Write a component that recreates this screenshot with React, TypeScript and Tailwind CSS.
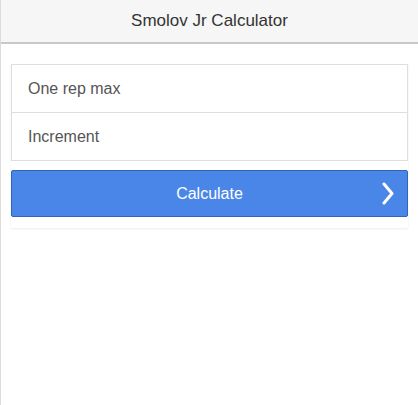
import React, { FC } from 'react';

const App: FC = () => {
  return (
    <div
      className="min-h-[405px] w-[418px] bg-white border-l border-[#dcdcdc]"
      style={{ fontFamily: '"Liberation Sans", Arial, sans-serif' }}
    >
      <div className="h-[44px] bg-[#f6f6f6] border-b-2 border-[#c8c8c8] flex items-center justify-center">
        <span className="text-[17px] text-[#333]">Smolov Jr Calculator</span>
      </div>

      <div className="px-[10px] pt-[20px]">
        <div className="shadow-[0_1px_2px_rgba(0,0,0,0.08)] pb-[11px]">
          <div className="border border-[#dedede] bg-white">
            <input
              className="block w-full h-[48px] px-[16px] text-[16px] text-[#333] placeholder:text-[#555] outline-none border-b border-[#dedede]"
              placeholder="One rep max"
            />
            <input
              className="block w-full h-[47px] px-[16px] text-[16px] text-[#333] placeholder:text-[#555] outline-none"
              placeholder="Increment"
            />
          </div>
          <button className="mt-[9px] relative w-full h-[47px] bg-[#4a86e8] border border-[#2f65bd] rounded-[2px] text-white text-[16px] flex items-center justify-center">
            Calculate
            <svg
              className="absolute right-[12px] top-[11px]"
              width="14"
              height="23"
              viewBox="0 0 14 23"
              fill="none"
              stroke="white"
              strokeWidth="3"
              strokeLinecap="round"
              strokeLinejoin="round"
            >
              <path d="M3 2l8 9.5-8 9.5" />
            </svg>
          </button>
        </div>
      </div>
    </div>
  );
};

export default App;
